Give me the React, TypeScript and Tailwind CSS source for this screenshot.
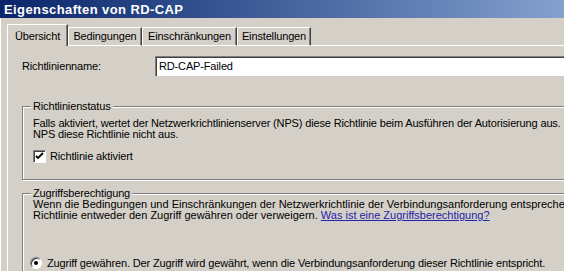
function Tab({ label, active, w }: { label: string; active?: boolean; w: string }) {
  if (active) {
    return (
      <div
        className={`${w} flex h-[22px] shrink-0 items-start justify-center rounded-tl-[2px] border-l border-t border-white border-r border-r-[#404040] pt-[6px] shadow-[inset_-1px_0_0_#808080]`}
      >
        {label}
      </div>
    );
  }
  return (
    <div
      className={`${w} flex h-[19px] shrink-0 items-start justify-center rounded-tl-[2px] border-l border-t border-b border-white border-r border-r-[#404040] pt-[3px] shadow-[inset_-1px_0_0_#808080]`}
    >
      {label}
    </div>
  );
}

function GroupBox({
  title,
  className,
  children,
}: {
  title: string;
  className?: string;
  children: React.ReactNode;
}) {
  return (
    <fieldset
      className={`w-[640px] border border-[#808080] pl-[10px] shadow-[inset_1px_1px_0_#fff,1px_1px_0_#fff] ${className ?? ""}`}
    >
      <legend className="-ml-[2px] bg-[#d4d0c8] px-[2px] leading-[13px]">{title}</legend>
      {children}
    </fieldset>
  );
}

export default function App() {
  return (
    <div className="h-[271px] w-[564px] overflow-hidden bg-[#d4d0c8] font-['Liberation_Sans',Arial,sans-serif] text-[11px] leading-[11px] tracking-[-0.15px] text-black">
      <div className="w-[760px]">
        <div className="flex h-[18px] items-center bg-gradient-to-r from-[#0a246a] to-[#b4cff2] pl-[4px] pt-[1px] text-[13px] font-bold tracking-[0.4px] text-white">
          Eigenschaften von RD-CAP
        </div>
        <div className="flex border-l border-white">
          <div className="w-[6px] shrink-0" />
          <div className="flex-1">
            <div className="mt-[6px] flex h-[22px] items-end">
              <Tab label="Übersicht" active w="w-[61px]" />
              <Tab label="Bedingungen" w="w-[74px]" />
              <Tab label="Einschränkungen" w="w-[95px]" />
              <Tab label="Einstellungen" w="w-[74px]" />
              <div className="h-[1px] flex-1 bg-white" />
            </div>
            <div className="border-l border-white pl-[14px] pt-[10px]">
              <div className="flex items-center">
                <div className="w-[133px]">Richtlinienname:</div>
                <div className="flex h-[20px] w-[500px] items-center border-l border-t border-[#808080] bg-white pl-[3px] shadow-[inset_1px_1px_0_#404040]">
                  RD-CAP-Failed
                </div>
              </div>

              <GroupBox title="Richtlinienstatus" className="mt-[24px] h-[80px]">
                <div className="mt-[5px] whitespace-nowrap">
                  Falls aktiviert, wertet der Netzwerkrichtlinienserver (NPS) diese Richtlinie beim Ausführen der Autorisierung aus. Falls deaktiviert, wertet
                </div>
                <div className="whitespace-nowrap">NPS diese Richtlinie nicht aus.</div>
                <div className="mt-[10px] flex items-center gap-[4px]">
                  <div className="flex h-[13px] w-[13px] items-center justify-center border-l border-t border-[#808080] border-r border-b border-r-white border-b-white bg-white shadow-[inset_1px_1px_0_#404040]">
                    <svg width="9" height="9" viewBox="0 0 9 9">
                      <path d="M1 4 L3 6 L8 1" stroke="#000" strokeWidth="1.8" fill="none" />
                    </svg>
                  </div>
                  <span>Richtlinie aktiviert</span>
                </div>
              </GroupBox>

              <GroupBox title="Zugriffsberechtigung" className="mt-[7px] h-[120px]">
                <div className="-mt-[1px] whitespace-nowrap tracking-normal">
                  Wenn die Bedingungen und Einschränkungen der Netzwerkrichtlinie der Verbindungsanforderung entsprechen, kann die
                </div>
                <div className="whitespace-nowrap tracking-normal">
                  Richtlinie entweder den Zugriff gewähren oder verweigern.{" "}
                  <span className="text-[#2323a8] underline">Was ist eine Zugriffsberechtigung?</span>
                </div>
                <div className="-ml-[3px] mt-[36px] flex items-center gap-[5px] whitespace-nowrap">
                  <div className="flex h-[12px] w-[12px] items-center justify-center rounded-full border border-[#808080] border-b-white border-r-white bg-white shadow-[inset_1px_1px_0_#404040]">
                    <div className="h-[4px] w-[4px] rounded-full bg-black" />
                  </div>
                  <span>
                    Zugriff gewähren. Der Zugriff wird gewährt, wenn die Verbindungsanforderung dieser Richtlinie entspricht.
                  </span>
                </div>
              </GroupBox>
            </div>
          </div>
        </div>
      </div>
    </div>
  );
}
